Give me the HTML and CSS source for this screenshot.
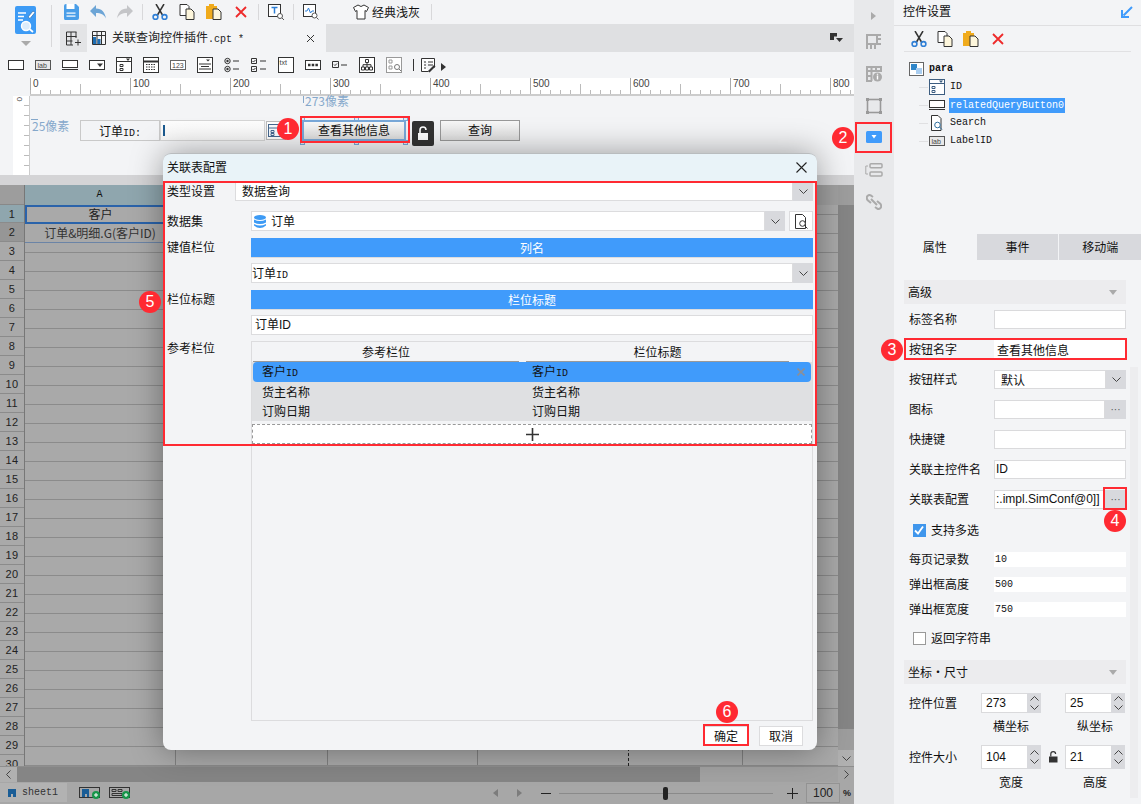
FILE: index.html
```html
<!DOCTYPE html>
<html lang="zh">
<head>
<meta charset="utf-8">
<title>关联表配置</title>
<link rel="stylesheet" href="styles.css">
</head>
<body>
<div class="app">
  <main class="main">
    <header class="head">
      <div class="logo-col">
        <svg class="logo" width="22" height="29" viewBox="0 0 22 29"><rect x="0" y="0" width="21" height="28" rx="2" fill="#3d9bf5"/><path d="M3 7h8M3 10.500h6M3 14h5" stroke="#fff" stroke-width="1.500"/><path d="M13 11l5-6 2 1.500-5 6z" fill="#fff" stroke="#2c6fb0" stroke-width=".7"/><circle cx="11" cy="20" r="4.500" fill="#dcecfb" stroke="#fff" stroke-width="1.400"/><path d="M14.500 23l3.500 3" stroke="#fff" stroke-width="1.800"/></svg>
        <span class="logo-arrow"></span>
        <span class="logo-sep"></span>
      </div>
      <div class="head-right">
        <div class="toolbar">
          <svg class="ti first-ti" width="16" height="16" viewBox="0 0 16 16"><path d="M1 2q0-2 2-2h10l3 3v11q0 2-2 2H2q-1 0-1-2z" fill="#4a9ee8"/><rect x="3.500" y="0" width="8" height="5" fill="#fff"/><rect x="3.500" y="8.500" width="9" height="1.200" fill="#fff"/><rect x="3.500" y="11.500" width="9" height="1.200" fill="#fff"/></svg>
          <svg class="ti m11" width="16" height="16" viewBox="0 0 16 16"><path d="M0 7l6-6v3.500c6 0 9 4 10 10-2-4-5-5.500-10-5.500v4z" fill="#6da5d6"/></svg>
          <svg class="ti m11" width="16" height="16" viewBox="0 0 16 16"><path d="M16 7l-6-6v3.500c-6 0-9 4-10 10 2-4 5-5.500 10-5.500v4z" fill="#c4c5c8"/></svg>
          <span class="tsep s9"></span>
          <svg class="ti m9" width="16" height="16" viewBox="0 0 16 16"><path d="M4 0l6.500 11M12 0L5.500 11" stroke="#333" stroke-width="1.500"/><circle cx="3.500" cy="13" r="2.400" fill="none" stroke="#2f7fd6" stroke-width="1.600"/><circle cx="12.500" cy="13" r="2.400" fill="none" stroke="#2f7fd6" stroke-width="1.600"/></svg>
          <svg class="ti m11" width="16" height="16" viewBox="0 0 16 16"><path d="M1 .5h7l2 2v9H1z" fill="#fff" stroke="#333"/><path d="M7 5h5l3 3v7.500H7z" fill="#fdf6dc" stroke="#333"/></svg>
          <svg class="ti m11" width="16" height="16" viewBox="0 0 16 16"><path d="M0 2h3V0h5v2h3v13H0z" fill="#f0ab1d"/><path d="M7 5h5l3 3v7.500H7z" fill="#fdf6dc" stroke="#333"/></svg>
          <svg class="ti m13" width="12" height="12" viewBox="0 0 12 12"><path d="M1 1l10 10M11 1L1 11" stroke="#ee2a2a" stroke-width="1.800"/></svg>
          <span class="tsep s10"></span>
          <svg class="ti m9" width="16" height="16" viewBox="0 0 16 16"><rect x=".5" y=".5" width="12" height="12" fill="#fff" stroke="#333"/><path d="M3.500 3.500h6M6.500 3.500v6" stroke="#2f7fd6" stroke-width="1.500"/><circle cx="12" cy="12" r="2.500" fill="#fff" stroke="#555"/><path d="M14 14l2 2" stroke="#555"/></svg>
          <span class="tsep s9"></span>
          <svg class="ti m9" width="16" height="16" viewBox="0 0 16 16"><rect x=".5" y=".5" width="12" height="12" fill="#fff" stroke="#333"/><path d="M2 7h2l1.500-3 2 5 1.500-2h2" fill="none" stroke="#2f7fd6"/><circle cx="11.500" cy="11.500" r="2.500" fill="#fff" stroke="#555"/><path d="M13.500 13.500l2 2" stroke="#555"/></svg>
          <svg class="ti shirt" width="16" height="16" viewBox="0 0 16 16"><path d="M5 1L.5 3.500l2 4 1.500-1v8.500h8V6.500l1.500 1 2-4L11 1Q8 4 5 1z" fill="#fff" stroke="#333"/></svg>
          <span class="theme">经典浅灰</span>
          <span class="tsep s11"></span>
        </div>
        <div class="tabbar">
          <span class="newtab"><svg width="15" height="15" viewBox="0 0 15 15"><path d="M.5 1h10M.5 5.500h10M.5 10h6M.5 1v13M5 1v13M10 1v6M.5 14H7M9 11.500h6M12 8.500v6" stroke="#333" fill="none"/></svg></span>
          <div class="tab">
            <svg width="14" height="14" viewBox="0 0 14 14"><path d="M.5 .5h13v13H.5zM.5 4.500h13M5 .5v13M9.500 .5v13" fill="none" stroke="#333"/><path d="M1 6h3v7H1zM5.500 8h3v5h-3z" fill="#1f6fb4"/></svg>
            <span class="tab-name">关联查询控件插件<span class="mono">.cpt *</span></span>
            <svg class="tab-x" width="9" height="9" viewBox="0 0 9 9"><path d="M1 1l7 7M8 1L1 8" stroke="#333"/></svg>
          </div>
          <svg class="tab-menu" width="13" height="10" viewBox="0 0 13 10"><path d="M0 0h7v3.500H4V7H0z" fill="#333"/><path d="M6 5h7l-3.500 4z" fill="#333"/></svg>
        </div>
      </div>
    </header>

    <div class="widgets">
      <svg width="16" height="12" viewBox="0 0 16 12"><rect x=".5" y="1.500" width="15" height="9" fill="#fff" stroke="#333"/></svg>
      <svg width="16" height="12" viewBox="0 0 16 12"><rect x=".5" y="1.500" width="15" height="9" fill="#e8e8e8" stroke="#555"/><text x="2.500" y="9" class="wt">lab</text></svg>
      <svg width="16" height="12" viewBox="0 0 16 12"><rect x=".5" y="1.500" width="15" height="7" fill="#fff" stroke="#333"/><path d="M0 10.500h16" stroke="#333"/></svg>
      <svg width="16" height="12" viewBox="0 0 16 12"><rect x=".5" y="1.500" width="15" height="9" fill="#fff" stroke="#333"/><path d="M8 4.500h6l-3 3.500z" fill="#333"/></svg>
      <svg width="16" height="16" viewBox="0 0 16 16"><rect x=".5" y=".5" width="15" height="15" fill="#fff" stroke="#333"/><path d="M1 4.500h14" stroke="#333"/><path d="M10 1.500h4l-2 2.500z" fill="#333"/><path d="M4 7.500h3v2H4zM4 11.500h3v2H4z" fill="none" stroke="#333"/></svg>
      <svg width="16" height="16" viewBox="0 0 16 16"><rect x=".5" y=".5" width="15" height="15" fill="#fff" stroke="#333"/><path d="M1 4.500h14" stroke="#333" stroke-width="2"/><path d="M3 7.500h10M3 10h10M3 12.500h10" stroke="#333" stroke-dasharray="1.500 1"/></svg>
      <svg width="16" height="12" viewBox="0 0 16 12"><rect x=".5" y="1.500" width="15" height="9" fill="#fff" stroke="#666"/><text x="2" y="9" class="wt">123</text></svg>
      <svg width="16" height="16" viewBox="0 0 16 16"><rect x=".5" y=".5" width="15" height="15" fill="#fff" stroke="#333"/><path d="M2 7h12M4 9.500h8M2 12h12" stroke="#333"/><path d="M9 2.500h4l-2 2z" fill="#333"/></svg>
      <svg width="16" height="16" viewBox="0 0 16 16"><circle cx="3.500" cy="4" r="2.700" fill="none" stroke="#333"/><circle cx="3.500" cy="4" r="1.200" fill="#333"/><circle cx="3.500" cy="12" r="2.700" fill="none" stroke="#333"/><circle cx="3.500" cy="12" r="1.200" fill="#333"/><path d="M9 4h6M9 12h6" stroke="#333"/></svg>
      <svg width="16" height="16" viewBox="0 0 16 16"><path d="M.5 1.500h5v5h-5zM.5 9.500h5v5h-5zM9 4h6M9 12h6" fill="none" stroke="#333"/><path d="M1.500 4l1 1 2-2M1.500 12l1 1 2-2" fill="none" stroke="#333"/></svg>
      <svg width="16" height="16" viewBox="0 0 16 16"><rect x=".5" y=".5" width="15" height="15" fill="#fff" stroke="#333"/><text x="1.500" y="8" class="wt">txt</text></svg>
      <svg width="16" height="12" viewBox="0 0 16 12"><rect x=".5" y="1.500" width="15" height="9" fill="#fff" stroke="#333"/><path d="M3 6h10" stroke="#333" stroke-width="2.500" stroke-dasharray="2.500 1.200"/></svg>
      <svg width="16" height="12" viewBox="0 0 16 12"><path d="M.5 2.500h6v6h-6zM9 6h6" fill="none" stroke="#333"/><path d="M2 5.500l1 1 2-2" fill="none" stroke="#333"/></svg>
      <svg width="16" height="16" viewBox="0 0 16 16"><rect x=".5" y=".5" width="15" height="15" fill="#fff" stroke="#333"/><path d="M6.500 2.500h3v3h-3zM2.500 10h3v3h-3zM6.500 10h3v3h-3zM10.500 10h3v3h-3zM8 5.500V10M4 10V7.700h8V10" fill="none" stroke="#333"/></svg>
      <svg width="16" height="16" viewBox="0 0 16 16"><rect x=".5" y=".5" width="15" height="15" fill="#fff" stroke="#999"/><path d="M3 3h3v3H3zM3 9h3v3H3z" fill="none" stroke="#999"/><circle cx="11" cy="10" r="2.500" fill="none" stroke="#777"/><path d="M13 12l2 2" stroke="#777"/></svg>
      <span class="wsep"></span>
      <svg class="w-last" width="15" height="15" viewBox="0 0 15 15"><path d="M.5 .5h13v9M.5 .5v13h7" fill="#fff" stroke="#333"/><path d="M3 4h2M7 4h5M3 7h2M7 7h5M3 10h2" stroke="#333"/><path d="M7 13l6-6 1.500 1.500-6 6z" fill="#333"/></svg>
      <span class="w-arrow"></span>
    </div>

    <div class="ruler">
      <span class="mark">0</span><span class="mark">100</span><span class="mark">200</span><span class="mark">300</span><span class="mark">400</span><span class="mark">500</span><span class="mark">600</span><span class="mark">700</span><span class="mark">800</span>
    </div>

    <section class="canvas">
      <div class="vruler"><span>0</span></div>
      <div class="design">
        <div class="px-top">273像素</div>
        <div class="px-left">25像素</div>
        <div class="form-row">
          <span class="f-label">订单<span class="mono">ID:</span></span>
          <span class="f-input"><i></i></span>
          <svg class="f-date" width="20" height="21" viewBox="0 0 20 21"><rect x=".5" y="1.500" width="19" height="18" fill="#fff" stroke="#bbb"/><rect x="2.500" y="4.500" width="15" height="12" fill="#f7fbff" stroke="#46688f"/><path d="M3 8h14M5 10.500h3v2H5zM5 13.500h3v2H5z" fill="none" stroke="#46688f"/></svg>
          <span class="f-btn sel">查看其他信息<i class="h h1"></i><i class="h h2"></i><i class="h h3"></i><i class="h h4"></i><i class="h h5"></i><i class="h h6"></i></span>
          <span class="f-lock"><svg width="12" height="15" viewBox="0 0 12 15"><rect x="1" y="7" width="10" height="7" fill="#fff"/><path d="M3 7V4a3 3 0 0 1 6 0" fill="none" stroke="#fff" stroke-width="1.600"/></svg></span>
          <span class="f-btn query">查询</span>
        </div>
      </div>
    </section>
    <div class="gap"></div>

    <section class="sheet">
      <div class="sheet-body">
        <div class="rows">
          <div class="corner"></div>
          <div class="rn rn-sel">1</div><div class="rn rn-two">2</div><div class="rn">3</div><div class="rn">4</div><div class="rn">5</div><div class="rn">6</div><div class="rn">7</div><div class="rn">8</div><div class="rn">9</div><div class="rn">10</div><div class="rn">11</div><div class="rn">12</div><div class="rn">13</div><div class="rn">14</div><div class="rn">15</div><div class="rn">16</div><div class="rn">17</div><div class="rn">18</div><div class="rn">19</div><div class="rn">20</div><div class="rn">21</div><div class="rn">22</div><div class="rn">23</div><div class="rn">24</div><div class="rn">25</div><div class="rn">26</div><div class="rn">27</div><div class="rn">28</div><div class="rn">29</div><div class="rn">30</div>
        </div>
        <div class="cells">
          <div class="colhead"><span class="col-a">A</span></div>
          <div class="cell-a1">客户</div>
          <div class="cell-a2">订单&amp;明细.G(客户ID)</div>
          <span class="page-line"></span>
        </div>
        <div class="vscroll">
          <span class="v-up"></span>
          <span class="v-thumb"></span>
          <span class="v-dn"><svg width="9" height="5" viewBox="0 0 9 5"><path d="M.5 .5l4 4 4-4" fill="none" stroke="#444"/></svg></span>
        </div>
      </div>
      <div class="hscroll">
        <span class="h-lt"><svg width="5" height="9" viewBox="0 0 5 9"><path d="M4.500 .5l-4 4 4 4" fill="none" stroke="#444"/></svg></span>
        <span class="h-thumb"></span>
        <span class="h-rt"><svg width="5" height="9" viewBox="0 0 5 9"><path d="M.5 .5l4 4-4 4" fill="none" stroke="#444"/></svg></span>
      </div>
      <div class="statusbar">
        <span class="sheet-tab"><svg width="8" height="8" viewBox="0 0 8 8"><path d="M0 0h8v8H5V5H3v3H0z" fill="#1a5d96"/></svg><span class="mono">sheet1</span></span>
        <svg class="st-add" width="22" height="12" viewBox="0 0 22 12"><rect x=".5" y=".5" width="20" height="10" fill="none" stroke="#333"/><path d="M3 2h7v8H8V7H6v3H3z" fill="#1a5d96"/><circle cx="17" cy="8" r="4" fill="#16964a"/><path d="M15 8h4M17 6v4" stroke="#fff"/></svg>
        <svg class="st-add2" width="22" height="12" viewBox="0 0 22 12"><rect x=".5" y=".5" width="20" height="10" fill="none" stroke="#333"/><path d="M3 2.500h4v2H3zM9 2.500h4v2H9zM3 6.500h10v2H3z" fill="none" stroke="#333"/><circle cx="17" cy="8" r="4" fill="#16964a"/><path d="M15 8h4M17 6v4" stroke="#fff"/></svg>
        <span class="st-flex"></span>
        <span class="tri-l"></span>
        <span class="tri-r"></span>
        <span class="minus"></span>
        <span class="slider"><i></i></span>
        <svg class="plus" width="11" height="11" viewBox="0 0 11 11"><path d="M0 5.500h11M5.500 0v11" stroke="#222"/></svg>
        <span class="zoomval">100</span>
        <span class="pct">%</span>
      </div>
    </section>
  </main>

  <nav class="strip">
    <span class="strip-arrow"></span>
    <svg class="si" width="16" height="16" viewBox="0 0 16 16"><path d="M1 15V1h14M1 1v9h10V1M1 10h14M11 5h4M5 10v5M9 10v5" fill="none" stroke="#aaa" stroke-width="2"/></svg>
    <svg class="si" width="16" height="16" viewBox="0 0 16 16"><path d="M6 15H1V1h14v5M1 5h14M1 10h5M5.500 1v14M10 1v4" fill="none" stroke="#aaa" stroke-width="2"/><circle cx="11.500" cy="11" r="4.500" fill="#aaa"/><path d="M11.500 9.500v4M11.500 7.700v1" stroke="#fff" stroke-width="1.400"/></svg>
    <svg class="si" width="16" height="16" viewBox="0 0 16 16"><rect x="1.500" y="1.500" width="13" height="13" fill="none" stroke="#999" stroke-width="1.600"/><path d="M0 0h3v3H0zM13 0h3v3h-3zM0 13h3v3H0zM13 13h3v3h-3z" fill="#999"/></svg>
    <svg class="si" width="16" height="12" viewBox="0 0 16 12"><rect width="16" height="12" rx="1.500" fill="#409bfb"/><path d="M5.500 4h5L8 7.500z" fill="#fff"/></svg>
    <svg class="si" width="18" height="14" viewBox="0 0 18 14"><rect x="5" y=".8" width="12" height="4" rx="1" fill="none" stroke="#aaa" stroke-width="1.500"/><rect x="5" y="9" width="12" height="4" rx="1" fill="none" stroke="#aaa" stroke-width="1.500"/><path d="M3 3H.8v8H3" fill="none" stroke="#aaa"/></svg>
    <svg class="si" width="16" height="16" viewBox="0 0 16 16"><path d="M7 3L5 1.500Q3 .5 1.500 2T1.500 6L5 9M9 13l2 1.500q2 1 3.500-.5t0-4L11 7M5 5l6 6" fill="none" stroke="#aaa" stroke-width="2"/></svg>
  </nav>

  <aside class="panel">
    <h2 class="panel-title"><span>控件设置</span><svg width="12" height="12" viewBox="0 0 12 12"><path d="M11 1L2.500 9.500M1 4v7h7" fill="none" stroke="#409bfb" stroke-width="2"/></svg></h2>
    <div class="panel-tools">
      <svg width="16" height="16" viewBox="0 0 16 16"><path d="M4 0l6.500 11M12 0L5.500 11" stroke="#333" stroke-width="1.500"/><circle cx="3.500" cy="13" r="2.400" fill="none" stroke="#2f7fd6" stroke-width="1.600"/><circle cx="12.500" cy="13" r="2.400" fill="none" stroke="#2f7fd6" stroke-width="1.600"/></svg>
      <svg width="16" height="16" viewBox="0 0 16 16"><path d="M1 .5h7l2 2v9H1z" fill="#fff" stroke="#333"/><path d="M7 5h5l3 3v7.500H7z" fill="#fdf6dc" stroke="#333"/></svg>
      <svg width="16" height="16" viewBox="0 0 16 16"><path d="M0 2h3V0h5v2h3v13H0z" fill="#f0ab1d"/><path d="M7 5h5l3 3v7.500H7z" fill="#fdf6dc" stroke="#333"/></svg>
      <svg class="t-del" width="12" height="12" viewBox="0 0 12 12"><path d="M1 1l10 10M11 1L1 11" stroke="#ee2a2a" stroke-width="1.800"/></svg>
    </div>
    <div class="tree">
      <div class="t-root"><svg width="15" height="14" viewBox="0 0 15 14"><rect x=".5" y=".5" width="14" height="13" fill="#fff" stroke="#666"/><rect x="2" y="2" width="6" height="6" fill="#2f86c9"/><rect x="7" y="6" width="6" height="6" fill="#a9cdf0"/></svg><span class="mono b">para</span></div>
      <div class="t-node"><svg width="16" height="16" viewBox="0 0 16 16"><rect x=".5" y=".5" width="15" height="15" fill="#fff" stroke="#3d5d80"/><path d="M1 4.500h14M3 7.500h3v2H3zM3 11.500h3v2H3z" fill="none" stroke="#3d5d80"/><path d="M10 1.500h4l-2 2.500z" fill="#3d5d80"/></svg><span class="mono">ID</span></div>
      <div class="t-node"><svg width="16" height="12" viewBox="0 0 16 12"><rect x=".5" y="1.500" width="15" height="7" fill="#fff" stroke="#333"/><path d="M0 10.500h16" stroke="#333"/></svg><span class="mono hl">relatedQueryButton0</span></div>
      <div class="t-node"><svg width="16" height="16" viewBox="0 0 16 16"><path d="M2.500 .5H9l3 3v12H2.500z" fill="#fff" stroke="#333"/><circle cx="8.500" cy="10" r="2.800" fill="#fff" stroke="#2f6f9e"/><path d="M10.500 12l2.500 2.500" stroke="#2f6f9e"/></svg><span class="mono">Search</span></div>
      <div class="t-node"><svg width="16" height="12" viewBox="0 0 16 12"><rect x=".5" y="1.500" width="15" height="9" fill="#e8e8e8" stroke="#555"/><text x="2.500" y="9" class="wt">lab</text></svg><span class="mono">LabelID</span></div>
    </div>
    <div class="ptabs"><span class="ptab on">属性</span><span class="ptab">事件</span><span class="ptab">移动端</span></div>
    <div class="props">
      <div class="sect first"><span>高级</span><i></i></div>
      <div class="p-row"><label>标签名称</label><span class="p-in"></span></div>
      <div class="p-row"><label>按钮名字</label><span class="p-in flat">查看其他信息</span></div>
      <div class="p-row"><label>按钮样式</label><span class="p-in">默认</span><span class="p-arrow"><svg width="9" height="5" viewBox="0 0 9 5"><path d="M.5 .5l4 4 4-4" fill="none" stroke="#444"/></svg></span></div>
      <div class="p-row"><label>图标</label><span class="p-in"></span><span class="p-more">···</span></div>
      <div class="p-row"><label>快捷键</label><span class="p-in"></span></div>
      <div class="p-row"><label>关联主控件名</label><span class="p-in latin">ID</span></div>
      <div class="p-row"><label>关联表配置</label><span class="p-in latin">:.impl.SimConf@0]]</span><span class="p-more">···</span></div>
      <div class="check"><span class="box on"><svg width="12" height="12" viewBox="0 0 12 12"><path d="M2 6.500l3 3 5-7" fill="none" stroke="#fff" stroke-width="1.800"/></svg></span>支持多选</div>
      <div class="n-row"><label>每页记录数</label><span class="n-in mono">10</span></div>
      <div class="n-row"><label>弹出框高度</label><span class="n-in mono">500</span></div>
      <div class="n-row"><label>弹出框宽度</label><span class="n-in mono">750</span></div>
      <div class="check plain"><span class="box"></span>返回字符串</div>
      <div class="sect"><span>坐标・尺寸</span><i></i></div>
      <div class="xy">
        <label>控件位置</label>
        <span class="spin">273<b><svg width="9" height="5" viewBox="0 0 9 5"><path d="M.5 4.500l4-4 4 4" fill="none" stroke="#444"/></svg><svg width="9" height="5" viewBox="0 0 9 5"><path d="M.5 .5l4 4 4-4" fill="none" stroke="#444"/></svg></b></span>
        <span class="spin s2">25<b><svg width="9" height="5" viewBox="0 0 9 5"><path d="M.5 4.500l4-4 4 4" fill="none" stroke="#444"/></svg><svg width="9" height="5" viewBox="0 0 9 5"><path d="M.5 .5l4 4 4-4" fill="none" stroke="#444"/></svg></b></span>
      </div>
      <div class="xy-cap"><span>横坐标</span><span class="c2">纵坐标</span></div>
      <div class="xy big">
        <label>控件大小</label>
        <span class="spin">104<b><svg width="9" height="5" viewBox="0 0 9 5"><path d="M.5 4.500l4-4 4 4" fill="none" stroke="#444"/></svg><svg width="9" height="5" viewBox="0 0 9 5"><path d="M.5 .5l4 4 4-4" fill="none" stroke="#444"/></svg></b></span>
        <svg class="mini-lock" width="9" height="12" viewBox="0 0 9 12"><rect y="5.500" width="8.500" height="6" fill="#333"/><path d="M1.800 5.500V3a2.400 2.400 0 0 1 4.800 0" fill="none" stroke="#333" stroke-width="1.200"/></svg>
        <span class="spin s2">21<b><svg width="9" height="5" viewBox="0 0 9 5"><path d="M.5 4.500l4-4 4 4" fill="none" stroke="#444"/></svg><svg width="9" height="5" viewBox="0 0 9 5"><path d="M.5 .5l4 4 4-4" fill="none" stroke="#444"/></svg></b></span>
      </div>
      <div class="xy-cap"><span>宽度</span><span class="c2">高度</span></div>
    </div>
    <span class="p-scroll"></span>
  </aside>
</div>

<div class="dialog">
  <div class="d-title"><span>关联表配置</span><svg width="11" height="11" viewBox="0 0 11 11"><path d="M.5 .5l10 10M10.500 .5l-10 10" stroke="#222" stroke-width="1.100"/></svg></div>
  <div class="d-body">
    <div class="d-row r-type"><label>类型设置</label><span class="d-in">数据查询</span><span class="d-arrow"><svg width="9" height="5" viewBox="0 0 9 5"><path d="M.5 .5l4 4 4-4" fill="none" stroke="#444"/></svg></span></div>
    <div class="d-row r-set"><label>数据集</label><span class="d-in db"><svg width="12" height="13" viewBox="0 0 12 13"><ellipse cx="6" cy="2.500" rx="6" ry="2.500" fill="#3d9bf5"/><path d="M0 4.500q6 3 12 0v3q-6 3-12 0zM0 9q6 3 12 0v1.500q-6 5-12 0z" fill="#3d9bf5"/></svg>订单</span><span class="d-arrow"><svg width="9" height="5" viewBox="0 0 9 5"><path d="M.5 .5l4 4 4-4" fill="none" stroke="#444"/></svg></span><span class="d-find"><svg width="13" height="15" viewBox="0 0 13 15"><path d="M.5 .5h7l3 3v11H.5z" fill="#fff" stroke="#333"/><circle cx="7.500" cy="9.500" r="2.800" fill="#fff" stroke="#333"/><path d="M9.500 11.500l3 3" stroke="#333"/></svg></span></div>
    <div class="d-row r-head"><label>键值栏位</label><span class="d-blue">列名</span></div>
    <div class="d-row r-sel"><label></label><span class="d-in n0">订单<span class="mono">ID</span></span><span class="d-arrow"><svg width="9" height="5" viewBox="0 0 9 5"><path d="M.5 .5l4 4 4-4" fill="none" stroke="#444"/></svg></span></div>
    <div class="d-row r-head2"><label>栏位标题</label><span class="d-blue">栏位标题</span></div>
    <div class="d-row r-txt"><label></label><span class="d-in n1">订单ID</span></div>
    <div class="d-row r-list"><label>参考栏位</label>
      <div class="list">
        <div class="l-head"><span>参考栏位</span><span>栏位标题</span></div>
        <div class="l-rows">
          <div class="l-row on"><span>客户<span class="mono">ID</span></span><span>客户<span class="mono">ID</span></span><svg width="8" height="8" viewBox="0 0 8 8"><path d="M.5 .5l7 7M7.500 .5l-7 7" stroke="#8c8f96" stroke-width="1.600"/></svg></div>
          <div class="l-row"><span>货主名称</span><span>货主名称</span></div>
          <div class="l-row"><span>订购日期</span><span>订购日期</span></div>
        </div>
        <div class="l-add"><svg width="13" height="13" viewBox="0 0 13 13"><path d="M0 6.500h13M6.500 0v13" stroke="#333" stroke-width="1.600"/></svg></div>
      </div>
    </div>
    <div class="d-foot"><span class="d-btn">确定</span><span class="d-btn">取消</span></div>
  </div>
</div>

<span class="redbox b1"></span>
<span class="redbox b2"></span>
<span class="redbox b3"></span>
<span class="redbox b4"></span>
<span class="redbox b5"></span>
<span class="redbox b6"></span>
<span class="badge n1">1</span>
<span class="badge n2">2</span>
<span class="badge n3">3</span>
<span class="badge n4">4</span>
<span class="badge n5">5</span>
<span class="badge n6">6</span>
</body>
</html>
```
FILE: styles.css
```css
* { box-sizing: border-box; }
html, body { margin: 0; padding: 0; }
body {
  position: relative;
  width: 1141px;
  height: 804px;
  overflow: hidden;
  background: #f3f4f6;
  color: #111;
  font: 12px/1.2 "Noto Sans CJK SC", "Liberation Sans", sans-serif;
}
.mono { font-family: "Liberation Mono", "Noto Sans CJK SC", monospace; font-size: 10px; }
.b { font-weight: 700; }
svg { display: block; flex: none; }
.wt { font: 7px "Liberation Sans", sans-serif; fill: #444; }

.app { display: flex; width: 1141px; height: 804px; }
.main { display: flex; flex-direction: column; width: 854px; flex: none; }

/* top */
.head { display: flex; height: 52px; }
.logo-col { position: relative; width: 60px; display: flex; flex-direction: column; align-items: flex-start; padding: 6px 0 0 15px; }
.logo-arrow { margin: 6px 0 0 6px; border: 5px solid transparent; border-top: 5px solid #aaa; border-bottom: 0; }
.logo-sep { position: absolute; left: 51px; top: 5px; width: 1px; height: 42px; background: #d8d8da; }
.head-right { flex: 1; display: flex; flex-direction: column; min-width: 0; }
.toolbar { height: 24px; display: flex; align-items: center; }
.first-ti { margin-left: 3px; }
.m11 { margin-left: 11px; } .m9 { margin-left: 9px; } .m13 { margin-left: 13px; }
.tsep { width: 1px; height: 16px; background: #d8d8da; }
.s9 { margin-left: 9px; } .s10 { margin-left: 11px; } .s11 { margin-left: 11px; }
.shirt { margin-left: 34px; }
.theme { margin-left: 3px; font-size: 12px; }
.tabbar { height: 28px; background: #dfe0e2; display: flex; align-items: stretch; }
.newtab { width: 27px; display: flex; align-items: center; justify-content: center; background: #e3e4e6; }
.tab { width: 239px; background: #f3f4f6; display: flex; align-items: center; padding: 0 7px 0 5px; gap: 6px; }
.tab-name { flex: 1; color: #222; white-space: nowrap; }
.tab-x { margin-right: 4px; }
.tab-menu { margin: 9px 0 0 auto; margin-right: 11px; }

.widgets { height: 26px; display: flex; align-items: center; gap: 11px; padding-left: 8px; }
.wsep { width: 1px; height: 12px; background: #333; margin: 0 -1px 0 0; }
.w-last { margin-left: -3px; }
.w-arrow { margin-left: -6px; margin-top: 4px; border: 4px solid transparent; border-left: 5px solid #333; border-right: 0; }

.ruler {
  height: 18px;
  margin-left: 30px;
  display: flex;
  background:
    linear-gradient(#ccc, #ccc) left bottom / 100% 2px no-repeat,
    repeating-linear-gradient(90deg, #bbb 0 1px, transparent 1px 10px) left bottom 2px / 100% 4px no-repeat,
    repeating-linear-gradient(90deg, #bbb 0 1px, transparent 1px 50px) left bottom 2px / 100% 10px no-repeat,
    #fff;
  overflow: hidden;
}
.mark { flex: 0 0 100px; height: 12px; border-left: 1px solid #aaa; padding-left: 2px; font: 10px/12px "Liberation Sans", sans-serif; color: #444; }

.canvas { display: flex; height: 79px; background: #f3f4f6; }
.vruler {
  width: 17px;
  margin-left: 13px;
  background:
    repeating-linear-gradient(0deg, transparent 0 9px, #bbb 9px 10px) right top / 5px 100% no-repeat,
    #fff;
  border-right: 1px solid #ccc;
}
.vruler span { display: block; margin: 1px 0 0 2px; transform: rotate(90deg); width: 8px; font: 8px/8px "Liberation Sans", sans-serif; color: #444; }
.design { flex: 1; position: relative; padding: 24px 0 0 50px; }
.px-top { position: absolute; left: 275px; top: -2px; color: #85a8cb; font-size: 12px; }
.px-top::before { content: ""; position: absolute; left: -2px; top: 2px; height: 7px; border-left: 1px solid #85a8cb; }
.px-left { position: absolute; left: 2px; top: 23px; color: #85a8cb; font-size: 12px; }
.px-left::before { content: ""; position: absolute; left: -1px; top: 0; width: 7px; border-top: 1px solid #85a8cb; }
.form-row { display: flex; align-items: flex-start; height: 21px; }
.f-label { width: 80px; height: 21px; background: #f3f4f6; border: 1px solid #c9c9c9; text-align: center; line-height: 19px; }
.f-input { width: 105px; height: 21px; background: linear-gradient(#fdfdfd, #f7f7f7); border: 1px solid #d5d5d5; padding: 4px 0 0 2px; }
.f-input i { display: block; width: 2px; height: 11px; background: #1b5a8f; }
.f-date { margin-left: 1px; }
.f-btn { display: flex; align-items: center; justify-content: center; height: 21px; border: 1px solid #999; background: linear-gradient(#f8f8f8, #dcdcdc); color: #111; }
.f-btn.sel { position: relative; width: 104px; margin-left: 16px; border-color: #79a8d8; border-width: 2px; }
.h { position: absolute; width: 5px; height: 5px; background: #dfe9f4; border: 1px solid #79a8d8; }
.h1 { left: -4px; top: -6px; } .h2 { left: 50px; top: -6px; } .h3 { right: -4px; top: -6px; }
.h4 { left: -4px; bottom: -6px; } .h5 { left: 50px; bottom: -6px; } .h6 { right: -4px; bottom: -6px; }
.f-lock { width: 22px; height: 25px; margin: 1px 0 0 6px; background: #333; border-radius: 2px; display: flex; align-items: center; justify-content: center; }
.f-btn.query { width: 80px; margin-left: 6px; }

.gap { height: 10px; background: #d4d4d6; }

/* sheet */
.sheet { flex: 1; display: flex; flex-direction: column; min-height: 0; background: #a7a7a7; }
.sheet-body { flex: 1; display: flex; min-height: 0; overflow: hidden; }
.rows { width: 25px; flex: none; border-right: 1px solid #777; background: #a9a9a9; }
.corner { height: 20px; background: #9d9d9d; border-bottom: 1px solid #888; }
.rn { height: 19px; line-height: 18px; text-align: center; color: #222; font: 11px/18px "Liberation Sans", sans-serif; letter-spacing: .3px; border-bottom: 1px solid #8b8b8b; }
.rn-sel { background: #8fa6ae; height: 18px; }
.rn-two { background: #969696; }
.cells {
  position: relative;
  flex: 1;
  min-width: 0;
  background:
    repeating-linear-gradient(0deg, transparent 0 18px, #8b8b8b 18px 19px) left 20px top 18px / 100% 100%,
    linear-gradient(90deg, transparent 0 150px, #808080 150px 151px, transparent 151px 302px, #808080 302px 303px, transparent 303px 452px, #808080 452px 453px, transparent 453px 717px, #808080 717px 718px, transparent 718px),
    #a9a9a9;
}
.colhead { height: 20px; background: #a0a0a0; }
.col-a { display: block; width: 150px; height: 20px; background: #8fa6ae; border-right: 1px solid #888; text-align: center; font: 10px/20px "Liberation Mono", monospace; }
.cell-a1 { width: 151px; height: 19px; background: #a9a9a9; border: 2px solid #2a63aa; text-align: center; line-height: 14px; font-size: 12px; color: #222; }
.cell-a2 { width: 150px; height: 19px; background: #a9a9a9; border-bottom: 1px solid #6b84a6; text-align: center; line-height: 17px; color: #333; white-space: nowrap; }
.page-line { position: absolute; left: 603px; top: 0; bottom: 0; border-left: 1px dashed #222; }
.vscroll { width: 16px; flex: none; background: #9d9d9d; display: flex; flex-direction: column; }
.v-up { height: 20px; }
.v-thumb { flex: 1; background: #858585; margin-bottom: 21px; }
.v-dn { height: 16px; display: flex; align-items: center; justify-content: center; background: #b0b0b0; }
.hscroll { height: 16px; flex: none; display: flex; background: #a2a2a2; border-top: 1px solid #8e8e8e; }
.h-lt { width: 17px; background: #b0b0b0; display: flex; align-items: center; justify-content: center; }
.h-thumb { width: 683px; background: #858585; }
.h-rt { width: 16px; margin-left: auto; display: flex; align-items: center; justify-content: center; background: #a7a7a7; }
.statusbar { height: 22px; flex: none; display: flex; align-items: center; }
.sheet-tab { width: 67px; height: 19px; margin-top: -1px; background: #b2b2b2; display: flex; align-items: center; gap: 6px; padding-left: 8px; color: #333; }
.sheet-tab .mono { font-size: 10px; }
.st-add { margin-left: 12px; }
.st-add2 { margin-left: 8px; }
.st-flex { flex: 1; }
.tri-l, .tri-r { width: 0; height: 0; border: 4px solid transparent; }
.tri-l { border-right: 5px solid #7c7c7c; border-left: 0; }
.tri-r { border-left: 5px solid #7c7c7c; border-right: 0; margin-left: 19px; }
.minus { width: 10px; height: 1px; background: #222; margin-left: 19px; }
.slider { position: relative; width: 214px; height: 1px; background: #8a8a8a; margin-left: 8px; }
.slider i { position: absolute; left: 104px; top: -6px; width: 5px; height: 13px; border-radius: 2px; background: #222; }
.plus { margin-left: 14px; }
.zoomval { width: 34px; height: 20px; margin-left: 8px; background: #aaa; border: 1px solid #939393; text-align: center; line-height: 18px; font-family: "Liberation Sans", sans-serif; color: #222; }
.pct { width: 8px; margin-left: 3px; font-size: 9px; font-weight: 700; color: #222; font-family: "Liberation Sans", sans-serif; margin-right: 3px; }

/* strip */
.strip { width: 40px; flex: none; background: #e8e9eb; display: flex; flex-direction: column; align-items: center; padding-top: 12px; }
.strip-arrow { margin-bottom: 14px; border: 4px solid transparent; border-left: 5px solid #aaa; border-right: 0; height: 0; width: 0; margin-left: -2px; }
.si { margin-bottom: 16px; }
.si:nth-child(5) { margin: 1px 0 20px; }
.si:nth-child(6) { margin-bottom: 17px; }

/* panel */
.panel { position: relative; width: 247px; flex: none; background: #f3f4f6; display: flex; flex-direction: column; }
.panel-title { margin: 0; height: 26px; display: flex; align-items: center; justify-content: space-between; padding: 0 8px 2px 9px; font-size: 12px; font-weight: 400; border-bottom: 1px solid #dfdfe1; }
.panel-tools { height: 26px; margin: 0 10px; display: flex; align-items: center; padding-left: 7px; gap: 10px; border-bottom: 1px solid #e1e1e3; }
.t-del { margin-left: 3px; }
.tree { height: 182px; padding: 8px 0 0 15px; }
.t-root, .t-node { display: flex; align-items: center; gap: 5px; height: 18px; color: #111; }
.t-node { position: relative; margin-left: 20px; background-size: 0; }
.t-node::before { content: ""; position: absolute; left: -10px; top: 9px; width: 9px; border-top: 1px solid #e0e0e2; }
.hl { background: #409bfb; color: #fff; height: 15px; line-height: 15px; padding: 0 1px; margin-left: -1px; font-size: 10px; }
.t-node svg { width: 16px; height: 16px; }
.ptabs { height: 26px; display: flex; gap: 1px; }
.ptab { flex: 1; display: flex; align-items: center; justify-content: center; background: #d8d9dd; }
.ptab.on { background: #f3f4f6; }
.props { flex: 1; min-height: 0; padding: 0 15px 0 10px; }
.sect { height: 24px; background: #ececee; display: flex; align-items: center; justify-content: space-between; padding: 0 9px 0 4px; margin-bottom: 6px; }
.sect.first { margin-top: 20px; }
.sect i { width: 0; height: 0; border: 4px solid transparent; border-top: 5px solid #aaa; border-bottom: 0; }
.p-row { display: flex; align-items: center; height: 19px; margin-bottom: 11px; }
.p-row label { width: 90px; flex: none; padding-left: 5px; }
.p-in { flex: 1; min-width: 0; height: 100%; background: #fff; border: 1px solid #dadadc; padding-left: 6px; line-height: 17px; white-space: nowrap; overflow: hidden; }
.p-in.flat { border: 0; padding-left: 3px; line-height: 19px; }
.p-in.latin { padding-left: 1px; font-family: "Liberation Sans", sans-serif; color: #111; }
.p-arrow { width: 20px; height: 100%; flex: none; background: #d8d9dd; display: flex; align-items: center; justify-content: center; }
.p-more { width: 21px; height: 100%; flex: none; background: #d8d9dd; text-align: center; font: 10px/19px "Liberation Sans", sans-serif; color: #555; }
.check { display: flex; align-items: center; gap: 5px; height: 16px; margin: 13px 0 14px 9px; }
.check.plain { margin: 13px 0 14px 9px; }
.box { width: 13px; height: 13px; border: 1px solid #999; background: #fff; }
.box.on { background: #3f96ec; border-color: #3f96ec; }
.box svg { margin: -1px; }
.n-row { display: flex; align-items: center; height: 15px; margin-bottom: 10px; }
.n-row label { width: 90px; flex: none; padding-left: 5px; }
.n-in { flex: 1; height: 100%; background: #fff; line-height: 15px; padding-left: 1px; }
.xy { display: flex; align-items: center; height: 20px; margin-top: 9px; }
.xy.big { height: 24px; margin-top: 10px; }
.xy label { width: 77px; flex: none; padding-left: 5px; }
.spin { position: relative; width: 60px; height: 20px; background: #fff; border: 1px solid #dadadc; padding-left: 4px; line-height: 18px; font-family: "Liberation Sans", sans-serif; }
.xy.big .spin { height: 24px; line-height: 22px; }
.spin b { position: absolute; right: -1px; top: -1px; bottom: -1px; width: 14px; background: #d8d9dd; display: flex; flex-direction: column; align-items: center; justify-content: space-evenly; }
.s2 { margin-left: 24px; }
.mini-lock { margin-left: 8px; margin-right: -17px; }
.xy-cap { display: flex; height: 16px; margin-top: 6px; padding-left: 77px; }
.xy-cap span { width: 60px; text-align: center; }
.xy-cap .c2 { margin-left: 24px; }
.p-scroll { position: absolute; right: 3px; top: 367px; bottom: 6px; width: 8px; background: #ededef; }

/* dialog */
.dialog {
  position: absolute;
  left: 163px;
  top: 153px;
  width: 654px;
  height: 597px;
  background: #f3f4f6;
  border-radius: 8px;
  box-shadow: 0 0 32px rgba(0, 0, 0, .38);
  display: flex;
  flex-direction: column;
  overflow: visible;
}
.d-title { height: 28px; flex: none; display: flex; align-items: center; justify-content: space-between; padding: 0 10px 0 4px; background: #e9f3f8; border-top: 1px solid #b9bcbe; border-radius: 8px 8px 0 0; }
.d-body { flex: 1; min-height: 0; padding: 1px 4px 0 4px; display: flex; flex-direction: column; }
.d-row { display: flex; align-items: flex-start; }
.d-row label { width: 84px; flex: none; line-height: 18px; }
.d-in { flex: 1; min-width: 0; height: 20px; background: #fff; border: 1px solid #dcdcde; display: flex; align-items: center; padding-left: 6px; gap: 5px; }
.d-arrow { width: 20px; height: 20px; flex: none; background: #d8d9dd; display: flex; align-items: center; justify-content: center; }
.r-type { height: 29px; }
.r-type .d-in, .r-type .d-arrow { height: 19px; }
.r-type label { width: 68px; }
.r-set { height: 27px; }
.r-set label { line-height: 20px; }
.r-set .d-in { padding-left: 2px; }
.d-find { width: 24px; height: 20px; margin-left: 4px; background: #fff; border: 1px solid #dcdcde; display: flex; align-items: center; justify-content: center; }
.r-head { height: 25px; }
.r-head2 { height: 25px; }
.r-sel { height: 27px; }
.r-txt { height: 26px; }
.d-blue { flex: 1; height: 20px; background: #409bfb; color: #fff; text-align: center; line-height: 20px; border-bottom: 1px solid #dcdcde; }
.d-in.n0 { display: block; padding-left: 0; line-height: 18px; }
.d-in.n1 { padding-left: 3px; font-family: "Liberation Sans", "Noto Sans CJK SC", sans-serif; }
.r-list { flex: none; height: 380px; }
.r-list label { line-height: 14px; }
.list { flex: 1; height: 380px; border: 1px solid #dcdcde; background: #f3f4f6; }
.l-head { height: 20px; display: flex; gap: 7px; padding-left: 1px; text-align: center; line-height: 20px; }
.l-head span { height: 20px; border-bottom: 1px solid #999; }
.l-head span:first-child { width: 266px; }
.l-head span:last-child { width: 263px; }
.l-rows { background: #dfe0e2; }
.l-row { position: relative; height: 19.500px; display: flex; align-items: center; padding-left: 10px; color: #111; }
.l-row span { display: block; width: 270px; line-height: 18px; }
.l-row.on { background: #409bfb; height: 20px; margin: 0 1px; border-radius: 4px; padding-left: 9px; }
.l-row svg { position: absolute; right: 6px; top: 6px; }
.l-row span span { display: inline; }
.l-add { height: 20px; margin-top: 3px; background: #fff; border: 1px dashed #999; display: flex; align-items: center; justify-content: center; }
.d-foot { display: flex; justify-content: flex-end; gap: 11px; padding: 5px 10px 0 0; }
.d-btn { width: 44px; height: 20px; background: #fff; border: 1px solid #dcdcde; text-align: center; line-height: 18px; }

/* annotations */
.redbox { position: absolute; border: 2px solid #ff2a32; pointer-events: none; }
.b1 { left: 300px; top: 116px; width: 110px; height: 27px; }
.b2 { left: 855px; top: 122px; width: 37px; height: 31px; }
.b3 { left: 904px; top: 338px; width: 223px; height: 22px; }
.b4 { left: 1103px; top: 487px; width: 24px; height: 23px; }
.b5 { left: 163px; top: 181px; width: 654px; height: 265px; }
.b6 { left: 703px; top: 724px; width: 46px; height: 22px; }
.badge { position: absolute; width: 22px; height: 22px; border-radius: 50%; background: #ff2a32; color: #fff; text-align: center; font: 16px/22px "Liberation Sans", sans-serif; }
.badge.n1 { left: 277px; top: 118px; }
.badge.n2 { left: 832px; top: 127px; }
.badge.n3 { left: 881px; top: 339px; }
.badge.n4 { left: 1104px; top: 510px; }
.badge.n5 { left: 139px; top: 291px; }
.badge.n6 { left: 716px; top: 701px; }
```
